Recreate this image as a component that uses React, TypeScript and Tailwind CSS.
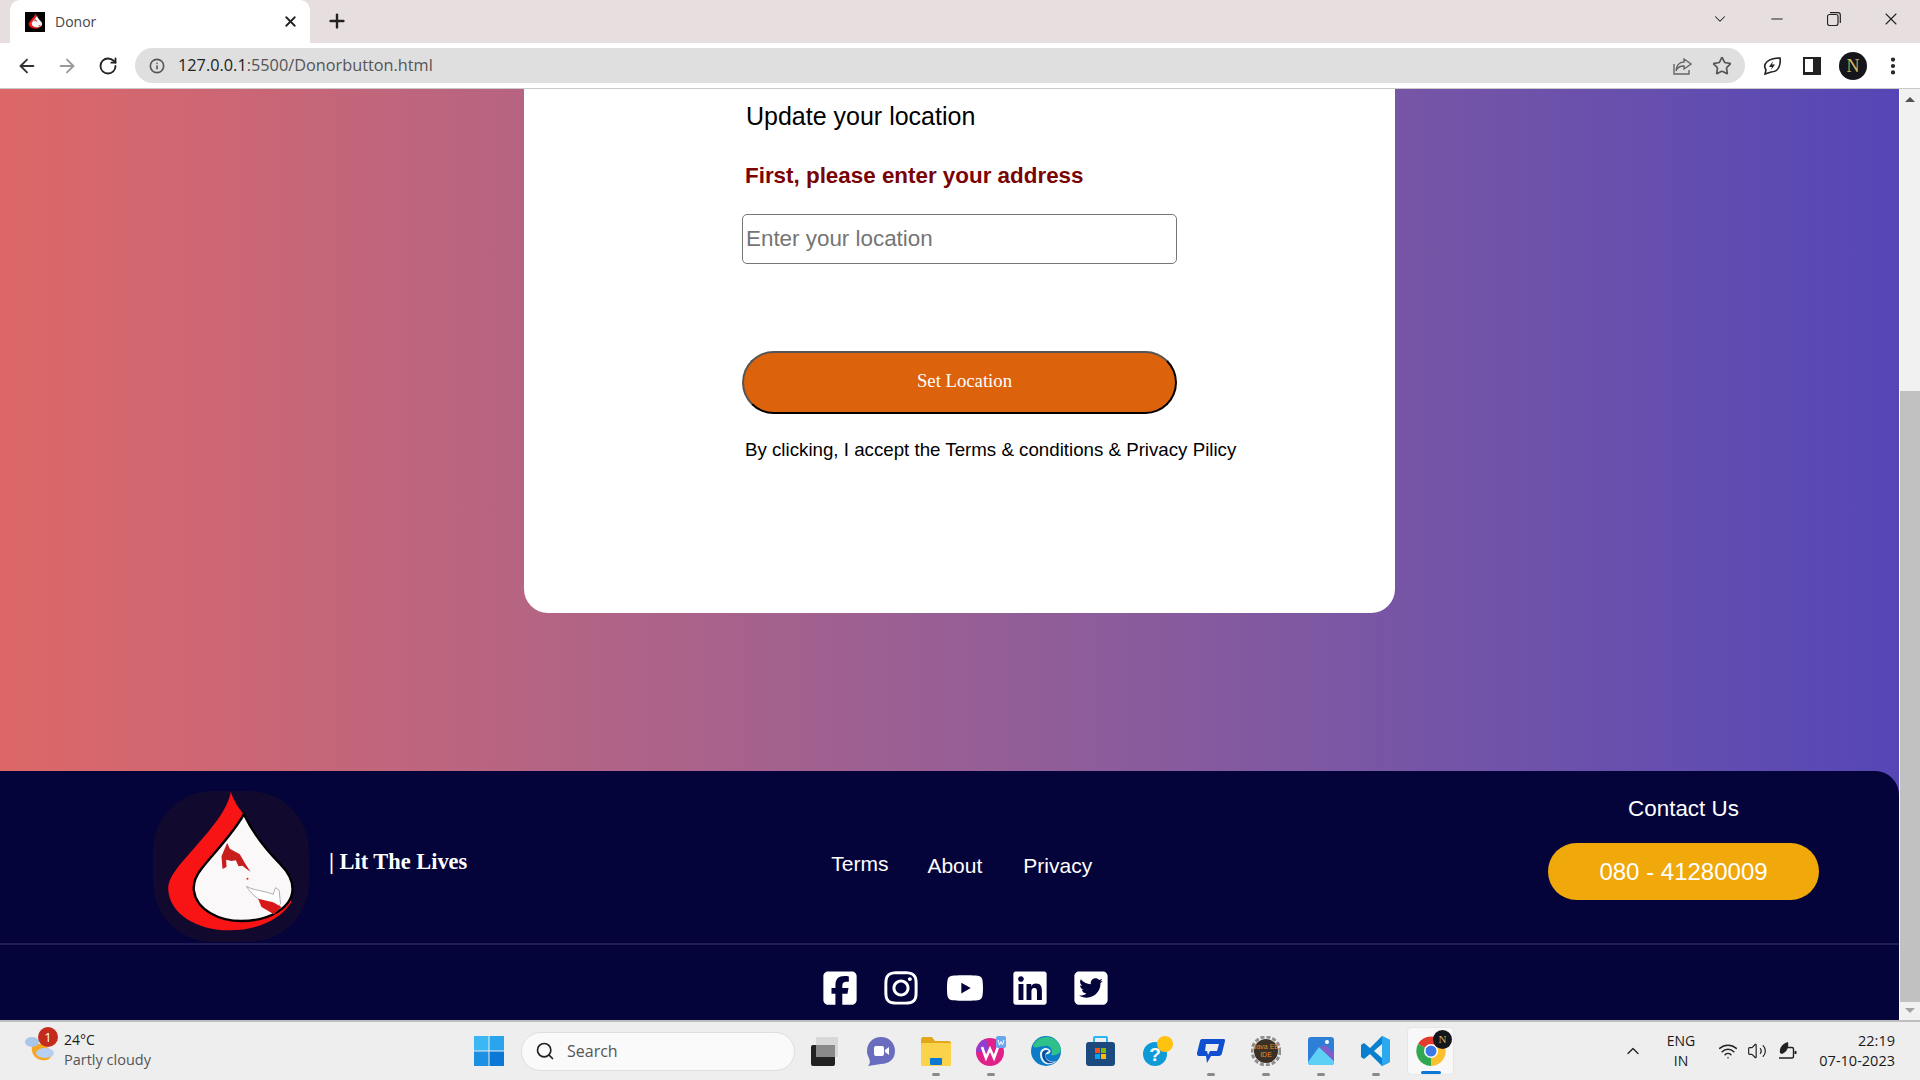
import React from 'react';
import { ArrowLeft, ArrowRight, RotateCw, Info, Star, X, Plus, ChevronDown, ChevronUp, Minus, Search, MoreVertical, Wifi, Volume2 } from 'lucide-react';
import { FaSquareFacebook, FaInstagram, FaYoutube, FaLinkedin, FaSquareTwitter } from 'react-icons/fa6';

function DropLogo({ className }: { className?: string }) {
  return (
    <svg viewBox="70 62 467 453" className={className}>
      <path d="M303 65C290 130 230 190 170 260C130 305 115 330 115 355C118 430 200 480 300 480C380 480 450 450 485 395L400 260L340 130C320 105 310 85 303 65Z" fill="#f81414" />
      <path d="M342 132C310 190 250 250 215 295C195 320 190 340 192 360C200 420 270 452 335 452C420 452 488 410 488 355C488 325 470 300 450 280C410 240 370 190 342 132Z" fill="#fbf8fa" stroke="#000" strokeWidth="7" />
      <path d="M292 218L275 258L278 296L290 290L289 268L305 272L318 270L326 288L338 286L350 296L362 304L345 278L330 252L300 235Z" fill="#c81e1e" />
      <circle cx="353" cy="325" r="3" fill="#f81414" />
      <path d="M350 348C370 360 400 360 430 372L437 352L448 360L452 400L432 430L385 385C370 375 358 362 350 348Z" fill="#fff" stroke="#888" strokeWidth="2" />
      <path d="M385 385L430 396L455 410L432 432L395 410Z" fill="#d81818" />
    </svg>
  );
}

function TaskIcon({ children, dot }: { children: React.ReactNode; dot?: boolean }) {
  return (
    <div className="relative w-[55px] h-[48px] flex items-center justify-center">
      <svg viewBox="0 0 30 30" className="w-[30px] h-[30px]">{children}</svg>
      {dot && <div className="absolute bottom-[-1px] left-[24px] w-[8px] h-[3px] rounded-full bg-[#8a8a8a]" />}
    </div>
  );
}

function Taskbar() {
  return (
    <div className="h-[60px] shrink-0 flex items-center bg-[#eeeeee] border-t-2 border-[#bdbdbd] font-['Open_Sans',sans-serif] text-[#1a1a1a]">
      <div className="relative w-[474px] h-full pl-[64px] pt-[8px]">
        <svg viewBox="0 0 30 30" className="absolute left-[25px] top-[11px] w-[30px] h-[30px]">
          <path d="M7 13C5 22 13 29 22 27C25 26 27 23 28 19L17 10Z" fill="#f5a623" />
          <ellipse cx="7" cy="9" rx="7" ry="5" fill="#a9c5ea" />
          <ellipse cx="20" cy="20" rx="9" ry="5" fill="#b7cff0" />
        </svg>
        <div className="absolute left-[38px] top-[5px] w-[20px] h-[20px] rounded-full bg-[#c42b1c] text-white text-[13px] leading-[20px] text-center">1</div>
        <div className="text-[14px] leading-[20px]">24°C</div>
        <div className="text-[14.5px] leading-[20px] text-[#555]">Partly cloudy</div>
      </div>
      <svg viewBox="0 0 30 30" className="w-[30px] h-[30px] shrink-0">
        <rect x="0" y="0" width="14.5" height="14.5" fill="#3bb8f3" />
        <rect x="15.5" y="0" width="14.5" height="14.5" fill="#2aa4ec" />
        <rect x="0" y="15.5" width="14.5" height="14.5" fill="#1c90e2" />
        <rect x="15.5" y="15.5" width="14.5" height="14.5" fill="#0a78d4" />
      </svg>
      <div className="ml-[17px] w-[274px] h-[39px] rounded-full bg-[#fafafa] border border-[#dedede] flex items-center pl-[13px] text-[#555] text-[16px]">
        <Search className="w-[20px] h-[20px] text-[#222]" strokeWidth={2} />
        <span className="ml-[12px]">Search</span>
      </div>
      <div className="ml-[3px] flex items-center">
        <TaskIcon>
          <rect x="5" y="1" width="22" height="20" fill="#d8d8d8" />
          <rect x="0" y="9" width="24" height="21" rx="2" fill="#222" />
          <rect x="5" y="9" width="19" height="12" fill="#8a8a8a" />
        </TaskIcon>
        <TaskIcon>
          <path d="M15 1C23 1 29 7 29 15C29 23 23 28 15 28L2 30C5 27 4 24 2 20C1 18 1 16 1 15C1 7 7 1 15 1Z" fill="#6a6cc0" />
          <rect x="8" y="10" width="10" height="10" rx="2" fill="#fff" />
          <path d="M19 14L23 11V19L19 16Z" fill="#fff" />
        </TaskIcon>
        <TaskIcon dot>
          <path d="M0 3C0 2 1 1 2 1H11L14 5H28C29 5 30 6 30 7V28H0Z" fill="#e0a81a" />
          <rect x="0" y="7" width="30" height="23" rx="1" fill="#fbd34a" />
          <rect x="9" y="22" width="12" height="7" rx="1" fill="#0a78d4" />
        </TaskIcon>
        <TaskIcon dot>
          <circle cx="14" cy="16" r="14" fill="#e0218a" />
          <path d="M0 16A14 14 0 0 1 10 3L14 16Z" fill="#8e3fd0" />
          <path d="M6 11L10 22L14 13L18 22L22 11" fill="none" stroke="#fff" strokeWidth="2.6" />
          <rect x="20" y="0" width="10" height="12" rx="2" fill="#6aa5ef" />
          <path d="M22 4L23.5 9L25 5.5L26.5 9L28 4" fill="none" stroke="#fff" strokeWidth="1" />
        </TaskIcon>
        <TaskIcon>
          <circle cx="15" cy="15" r="15" fill="#0c7cc8" />
          <path d="M2 9A15 15 0 0 1 30 13C30 18 24 20 20 19C23 14 19 9 14 10C8 10 3 14 2 9Z" fill="#2fc18a" />
          <path d="M9 18C9 12 16 10 19 14C21 16 17 19 15 18C12 22 19 27 25 25C20 31 9 29 9 18Z" fill="#fff" opacity="0.9" />
          <path d="M11 18C11 14 16 13 18 15C16 16 14 17 14 20C15 25 20 27 24 25C18 30 11 26 11 18Z" fill="#0a4f9e" />
        </TaskIcon>
        <TaskIcon>
          <rect x="0" y="6" width="29" height="24" rx="3" fill="#1d4a7e" />
          <path d="M8 6V2C8 1 9 1 9 1H20C21 1 21 2 21 2V6" fill="none" stroke="#29b6f6" strokeWidth="2" />
          <rect x="9" y="12" width="5" height="5" fill="#f25022" />
          <rect x="15" y="12" width="5" height="5" fill="#7fba00" />
          <rect x="9" y="18" width="5" height="5" fill="#00a4ef" />
          <rect x="15" y="18" width="5" height="5" fill="#ffb900" />
        </TaskIcon>
        <div className="ml-[2px] -mr-[2px]">
          <TaskIcon>
            <circle cx="12" cy="18" r="12" fill="#0e9ad6" />
            <text x="12" y="25" textAnchor="middle" fill="#fff" fontSize="19" fontWeight="700" fontFamily="'Liberation Sans',sans-serif">?</text>
            <circle cx="22" cy="8" r="8" fill="#ffc20e" />
          </TaskIcon>
        </div>
        <TaskIcon dot>
          <path d="M6 3H28C29 3 29 4 29 5L26 17C26 19 24 20 23 20H15L11 27L10 20H3C1 20 1 18 1 17L4 5C4 4 5 3 6 3Z" fill="#0f4fd0" />
          <path d="M10 8H23L21 15H14L12 19L11 15H9Z" fill="#eeeeee" />
        </TaskIcon>
        <TaskIcon dot>
          <circle cx="15" cy="15" r="14" fill="none" stroke="#8f8f8f" strokeWidth="3" strokeDasharray="4 2" />
          <circle cx="15" cy="15" r="12" fill="#3a3026" />
          <text x="15" y="13" textAnchor="middle" fill="#e8882a" fontSize="7" fontFamily="'Liberation Sans',sans-serif">Java EE</text>
          <text x="15" y="21" textAnchor="middle" fill="#e8882a" fontSize="7" fontFamily="'Liberation Sans',sans-serif">IDE</text>
        </TaskIcon>
        <TaskIcon dot>
          <rect x="2" y="1" width="26" height="28" rx="3" fill="#2d7fd8" />
          <path d="M2 26L13 11L28 25V26C28 28 27 29 25 29H5C3 29 2 28 2 26Z" fill="#5fd0f5" />
          <path d="M13 11L28 25V17L20 9Z" fill="#7c5fc9" />
          <circle cx="21" cy="6" r="2" fill="#fff" />
        </TaskIcon>
        <TaskIcon dot>
          <path d="M21 0L29 4V26L21 30L9 18L3 23L0 21V9L3 7L9 12ZM21 8L13 15L21 22Z" fill="#0a7fd0" />
          <path d="M21 0L29 4V26L21 30Z" fill="#2aa8f0" />
        </TaskIcon>
        <div className="relative w-[47px] h-[48px] ml-[4px] rounded-[4px] bg-[#f8f8f8] border border-[#e6e6e6] flex items-center justify-center">
          <svg viewBox="0 0 30 30" className="w-[30px] h-[30px]">
            <path d="M15 15L2 8A15 15 0 0 1 28 8Z" fill="#e33b2e" />
            <path d="M15 15L2 8A15 15 0 0 0 15 30Z" fill="#2fa84f" />
            <path d="M15 15L28 8A15 15 0 0 1 15 30Z" fill="#fbc02d" />
            <circle cx="15" cy="15" r="7" fill="#fff" />
            <circle cx="15" cy="15" r="5.5" fill="#3b78e7" />
          </svg>
          <div className="absolute right-[1px] top-[2px] w-[19px] h-[19px] rounded-full bg-[#15151c] text-[#d4b45a] text-[11px] leading-[19px] text-center font-['Liberation_Serif',serif]">N</div>
          <div className="absolute bottom-[0px] left-[13px] w-[20px] h-[3px] rounded-full bg-[#0a78d4]" />
        </div>
      </div>
      <div className="ml-[169px] w-[20px] flex justify-center">
        <ChevronUp className="w-[20px] h-[20px] text-[#222]" strokeWidth={1.6} />
      </div>
      <div className="ml-[18px] w-[40px] text-center text-[14px] leading-[20px]">
        <div>ENG</div>
        <div>IN</div>
      </div>
      <Wifi className="ml-[17px] w-[20px] h-[20px] text-[#222]" strokeWidth={1.8} />
      <Volume2 className="ml-[9px] w-[20px] h-[20px] text-[#222]" strokeWidth={1.4} />
      <svg viewBox="0 0 20 20" className="ml-[11px] w-[20px] h-[20px]">
        <path d="M2 12C1 7 4 3 10 1C11 6 9 11 4 13Z" fill="#222" />
        <path d="M1 17H14C15 17 15.5 16.5 15.5 15V8C15.5 7 15 6.5 14 6.5H9" fill="none" stroke="#222" strokeWidth="1.4" />
        <rect x="16.5" y="10" width="2" height="3" fill="#222" />
      </svg>
      <div className="ml-[auto] mr-[25px] text-right text-[14.5px] leading-[20px]">
        <div>22:19</div>
        <div>07-10-2023</div>
      </div>
    </div>
  );
}

function BrowserChrome() {
  return (
    <div className="shrink-0 font-['Open_Sans',sans-serif]">
      <div className="h-[43px] bg-[#e7dfdf] flex items-end pl-[10px] relative">
        <div className="w-[300px] h-[43px] bg-white rounded-t-[10px] flex items-center pl-[15px] pr-[11px]">
          <div className="w-[20px] h-[20px] bg-black flex items-center justify-center">
            <DropLogo className="w-[17px] h-[17px]" />
          </div>
          <span className="ml-[10px] text-[14px] text-[#444]">Donor</span>
          <X className="ml-auto w-[17px] h-[17px] text-[#222]" strokeWidth={2.6} />
        </div>
        <Plus className="ml-[16px] mb-[11px] w-[22px] h-[22px] text-[#222]" strokeWidth={2.6} />
        <div className="ml-auto h-[43px] pb-[6px] flex items-center text-[#222]">
          <ChevronDown className="w-[18px] h-[18px]" strokeWidth={1.4} />
          <Minus className="ml-[39px] w-[18px] h-[18px]" strokeWidth={1.4} />
          <svg viewBox="0 0 14 14" className="ml-[41px] w-[14px] h-[14px]">
            <rect x="0.5" y="2.5" width="10.5" height="11" rx="2" fill="none" stroke="#222" strokeWidth="1.2" />
            <path d="M3 0.7H11C12.5 0.7 13.3 1.5 13.3 3V11" fill="none" stroke="#222" strokeWidth="1.2" />
          </svg>
          <X className="ml-[40px] mr-[19px] w-[20px] h-[20px]" strokeWidth={1.3} />
        </div>
      </div>
      <div className="h-[46px] bg-white border-b border-[#c9c9c9] flex items-center pl-[16px]">
        <ArrowLeft className="w-[22px] h-[22px] text-[#333]" strokeWidth={2} />
        <ArrowRight className="ml-[18px] w-[22px] h-[22px] text-[#999]" strokeWidth={2} />
        <RotateCw className="ml-[20px] w-[20px] h-[20px] text-[#222]" strokeWidth={2.2} />
        <div className="ml-[17px] w-[1610px] h-[35px] rounded-full bg-[#dfdfdf] flex items-center pl-[14px] pr-[13px]">
          <Info className="w-[16px] h-[16px] text-[#555]" strokeWidth={2.4} />
          <span className="ml-[13px] text-[16.3px] text-[#555]"><span className="text-[#222]">127.0.0.1</span>:5500/Donorbutton.html</span>
          <svg viewBox="0 0 20 20" className="ml-auto w-[20px] h-[20px]">
            <path d="M2 8V18H17V14" fill="none" stroke="#666" strokeWidth="1.4" />
            <path d="M12 3L19 8L12 13V10C8 10 5 12 4 15C4 10 7 6 12 6Z" fill="none" stroke="#666" strokeWidth="1.4" />
          </svg>
          <Star className="ml-[20px] w-[20px] h-[20px] text-[#555]" strokeWidth={2} />
        </div>
        <svg viewBox="0 0 20 20" className="ml-[17px] w-[20px] h-[20px]">
          <path d="M18 2C19 8 17 16 9 16L3 18L4 14C0 8 6 2 18 2Z" fill="none" stroke="#222" strokeWidth="1.6" />
          <path d="M11 5L7 11H10L9 14L13 8.5H10Z" fill="#222" />
        </svg>
        <div className="ml-[21px] w-[18px] h-[18px] bg-[#222] flex items-center">
          <div className="ml-[2px] w-[8px] h-[13px] bg-white" />
        </div>
        <div className="ml-[18px] w-[28px] h-[28px] rounded-full bg-[#15151c] text-[#d4b45a] text-[18px] leading-[28px] text-center font-['Liberation_Serif',serif]">N</div>
        <MoreVertical className="ml-[15px] w-[22px] h-[22px] text-[#222]" strokeWidth={2.6} />
      </div>
    </div>
  );
}

function Scrollbar() {
  return (
    <div className="w-[21px] shrink-0 bg-[#f1f1f1] border-l border-white flex flex-col items-center">
      <div className="mt-[8px] w-0 h-0 border-x-[5px] border-x-transparent border-b-[5px] border-b-[#505050]" />
      <div className="mt-auto w-full h-[611px] bg-[#c1c1c1]" />
      <div className="mt-[6px] mb-[7px] w-0 h-0 border-x-[5px] border-x-transparent border-t-[5px] border-t-[#a3a3a3]" />
    </div>
  );
}

export default function App() {
  return (
    <div className="w-[1920px] h-[1080px] flex flex-col overflow-hidden font-['Liberation_Sans',sans-serif]">
      <BrowserChrome />
      <div className="flex-1 flex min-h-0">
        <main className="flex-1 flex flex-col bg-gradient-to-r from-[#dd6767] to-[#5546b6]">
          <div className="ml-[524px] w-[871px] h-[524px] shrink-0 bg-white rounded-b-[24px] pl-[218px]">
            <h1 className="ml-[4px] pt-[12px] text-[25px] leading-[30px] text-black">Update your location</h1>
            <h2 className="ml-[3px] mt-[31px] text-[22.4px] leading-[28px] font-bold text-[#7a0303]">First, please enter your address</h2>
            <input placeholder="Enter your location" className="block mt-[24px] w-[435px] h-[50px] px-[3px] rounded-[5px] border border-[#767676] text-[22.4px] placeholder:text-[#757575]" />
            <button className="block mt-[87px] w-[435px] h-[63px] pb-[2px] rounded-full border-2 border-t-[#555] border-l-[#555] border-r-black border-b-black bg-[#dd620c] pl-[10px] text-white text-[18.72px] font-['Liberation_Serif',serif]">Set Location</button>
            <p className="ml-[3px] mt-[23px] text-[18.72px] leading-[26px] text-black">By clicking, I accept the Terms &amp; conditions &amp; Privacy Pilicy</p>
          </div>
          <footer className="mt-[158px] flex-1 bg-[#04043a] rounded-tr-[24px] flex flex-col text-white">
            <div className="h-[174px] flex border-b-2 border-[#1f1c55]">
              <div className="ml-[153px] mt-[20px] w-[156px] h-[151px] rounded-[60px] bg-[#120a2e] shrink-0">
                <DropLogo className="w-[156px] h-[151px]" />
              </div>
              <div className="ml-[20px] mt-[77px] text-[22.4px] leading-[28px] font-bold font-['Liberation_Serif',serif]">| Lit The Lives</div>
              <div className="ml-[364px] mt-[81px] text-[21px] leading-[24px]">Terms</div>
              <div className="ml-[39px] mt-[83px] text-[21px] leading-[24px]">About</div>
              <div className="ml-[41px] mt-[83px] text-[21px] leading-[24px]">Privacy</div>
              <div className="ml-auto mr-[80px] mt-[24px] w-[271px] flex flex-col items-center">
                <div className="text-[22.4px] leading-[28px]">Contact Us</div>
                <div className="mt-[20px] w-full h-[57px] rounded-full bg-[#f1a80a] flex items-center justify-center text-[24px]">080 - 41280009</div>
              </div>
            </div>
            <div className="flex-1 flex items-center pl-[821px] pt-[11px]">
              <FaSquareFacebook className="w-[38px] h-[38px]" />
              <FaInstagram className="ml-[23px] w-[38px] h-[38px]" />
              <FaYoutube className="ml-[26px] w-[38px] h-[38px]" />
              <FaLinkedin className="ml-[27px] w-[38px] h-[38px]" />
              <FaSquareTwitter className="ml-[23px] w-[38px] h-[38px]" />
            </div>
          </footer>
        </main>
        <Scrollbar />
      </div>
      <Taskbar />
    </div>
  );
}
